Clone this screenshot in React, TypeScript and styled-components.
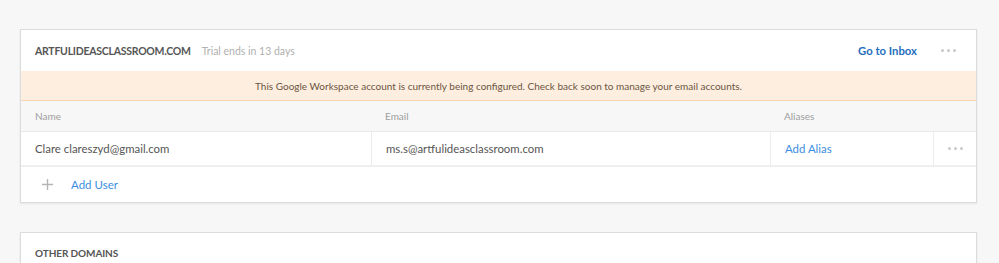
import React from "react";
import styled, { createGlobalStyle } from "styled-components";

const GlobalStyle = createGlobalStyle`
  body {
    margin: 0;
    background: #f7f7f7;
    font-family: "Lato", "Helvetica Neue", Arial, sans-serif;
    -webkit-font-smoothing: antialiased;
  }
`;

const Page = styled.div`
  display: flex;
  flex-flow: column;
  gap: 29px;
  padding: 29px 22px 0 20px;
`;

const Card = styled.section`
  background: #fff;
  border: 1px solid #dcdcdc;
  box-shadow: 0 1px 2px rgba(0, 0, 0, 0.08);
`;

const Header = styled.header`
  display: flex;
  align-items: center;
  height: 41px;
  padding: 0 20px 0 14px;
`;

const Domain = styled.h2`
  margin: 0;
  font-size: 10.5px;
  font-weight: 700;
  letter-spacing: -0.25px;
  color: #555;
  text-transform: uppercase;
`;

const Trial = styled.span`
  margin-left: 11px;
  font-size: 10.5px;
  color: #b0b0b0;
`;

const Spacer = styled.div`
  flex: 1;
`;

const InboxLink = styled.a`
  font-size: 11.3px;
  font-weight: 700;
  color: #1f6fbd;
  text-decoration: none;
  margin-right: 24px;
`;

const Dots = styled.span`
  display: flex;
  gap: 3px;
  & > i {
    width: 3px;
    height: 3px;
    border-radius: 50%;
    background: #c8c8c8;
  }
`;

const Banner = styled.div`
  height: 29px;
  display: flex;
  align-items: center;
  justify-content: center;
  background: #fdeee0;
  border-bottom: 1px solid #f7d3ae;
  font-size: 10px;
  color: #6b5540;
`;

const Row = styled.div<{ $head?: boolean }>`
  display: grid;
  grid-template-columns: 350px 399px 163px 1fr;
  height: ${({ $head }) => ($head ? "30px" : "33px")};
  background: ${({ $head }) => ($head ? "#f7f7f7" : "#fff")};
  border-bottom: ${({ $head }) => ($head ? "1px solid #e8e8e8" : "2px solid #efefef")};
`;

const Cell = styled.div<{ $head?: boolean; $link?: boolean; $divided?: boolean }>`
  display: flex;
  align-items: center;
  padding-left: 14px;
  font-size: ${({ $head }) => ($head ? "10px" : "11.4px")};
  color: ${({ $head, $link }) => ($link ? "#3b8ee0" : $head ? "#9e9e9e" : "#555")};
  border-left: ${({ $divided }) => ($divided ? "1px solid #ececec" : "none")};
`;

const DotsCell = styled.div`
  display: flex;
  align-items: center;
  justify-content: center;
  border-left: 1px solid #ececec;
`;

const AddRow = styled.div`
  display: flex;
  align-items: center;
  height: 35px;
  padding-left: 21px;
  gap: 18px;
  font-size: 11.5px;
  color: #3b8ee0;
`;

const SectionTitle = styled.h3`
  margin: 0;
  padding: 14px 14px 0;
  height: 40px;
  font-size: 10px;
  font-weight: 700;
  letter-spacing: -0.1px;
  color: #555;
  text-transform: uppercase;
`;

function MoreDots() {
  return (
    <Dots>
      <i />
      <i />
      <i />
    </Dots>
  );
}

export default function App() {
  return (
    <>
      <GlobalStyle />
      <Page>
        <Card>
          <Header>
            <Domain>artfulideasclassroom.com</Domain>
            <Trial>Trial ends in 13 days</Trial>
            <Spacer />
            <InboxLink href="#">Go to Inbox</InboxLink>
            <MoreDots />
          </Header>
          <Banner>
            This Google Workspace account is currently being configured. Check back soon to manage your email accounts.
          </Banner>
          <Row $head>
            <Cell $head>Name</Cell>
            <Cell $head>Email</Cell>
            <Cell $head>Aliases</Cell>
            <Cell $head />
          </Row>
          <Row>
            <Cell>Clare clareszyd@gmail.com</Cell>
            <Cell $divided>ms.s@artfulideasclassroom.com</Cell>
            <Cell $divided $link>Add Alias</Cell>
            <DotsCell>
              <MoreDots />
            </DotsCell>
          </Row>
          <AddRow>
            <svg width="11" height="11" viewBox="0 0 11 11">
              <path d="M5.5 0v11M0 5.5h11" stroke="#b5b5b5" strokeWidth="1.4" />
            </svg>
            Add User
          </AddRow>
        </Card>
        <Card>
          <SectionTitle>Other domains</SectionTitle>
        </Card>
      </Page>
    </>
  );
}
